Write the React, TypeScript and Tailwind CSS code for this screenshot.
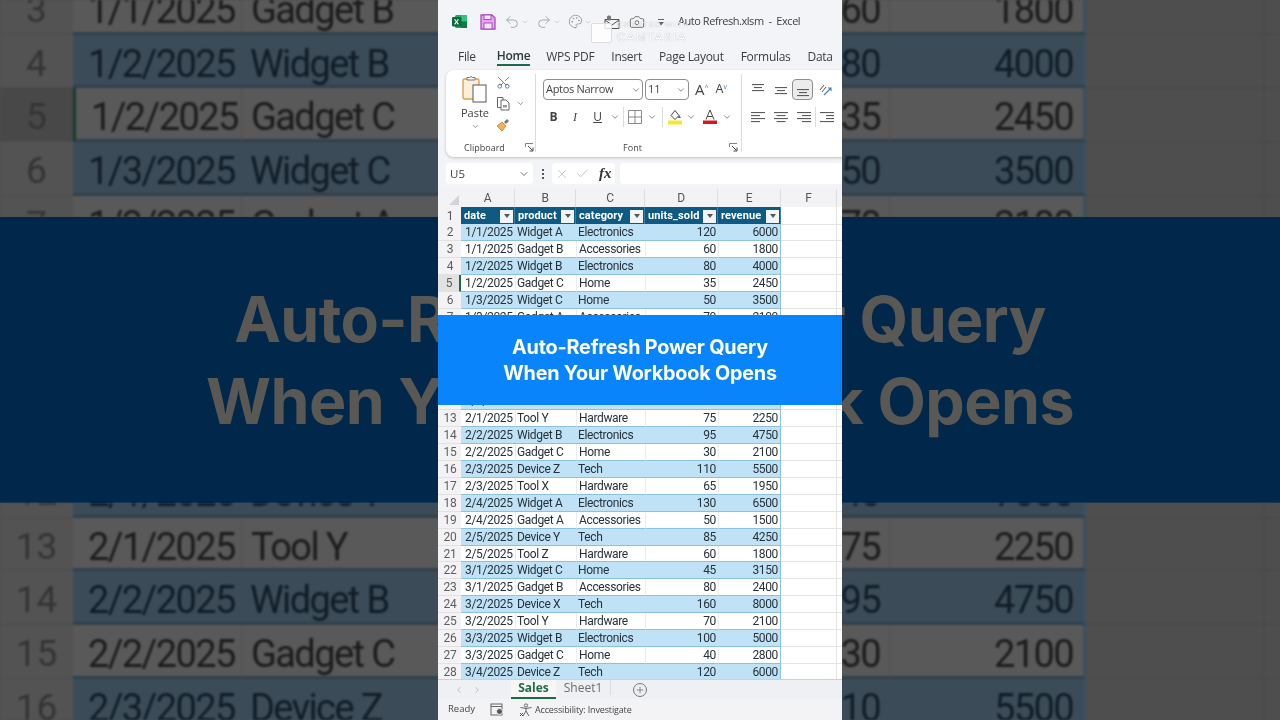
import React from 'react';
import { Undo2, Redo2, Palette, Camera, ChevronDown, X, Check, Plus, Scissors, ChevronLeft, ChevronRight } from 'lucide-react';

type Row = [number, string, string, string, number, number];

const rows: Row[] = [
    [2, '1/1/2025', 'Widget A', 'Electronics', 120, 6000],
    [3, '1/1/2025', 'Gadget B', 'Accessories', 60, 1800],
    [4, '1/2/2025', 'Widget B', 'Electronics', 80, 4000],
    [5, '1/2/2025', 'Gadget C', 'Home', 35, 2450],
    [6, '1/3/2025', 'Widget C', 'Home', 50, 3500],
    [7, '1/3/2025', 'Gadget A', 'Accessories', 70, 2100],
    [8, '1/4/2025', 'Device X', 'Tech', 150, 7500],
    [9, '1/4/2025', 'Tool X', 'Hardware', 90, 2700],
    [10, '1/5/2025', 'Widget A', 'Electronics', 110, 5500],
    [11, '1/5/2025', 'Gadget B', 'Accessories', 55, 1650],
    [12, '2/1/2025', 'Device Y', 'Tech', 140, 7000],
    [13, '2/1/2025', 'Tool Y', 'Hardware', 75, 2250],
    [14, '2/2/2025', 'Widget B', 'Electronics', 95, 4750],
    [15, '2/2/2025', 'Gadget C', 'Home', 30, 2100],
    [16, '2/3/2025', 'Device Z', 'Tech', 110, 5500],
    [17, '2/3/2025', 'Tool X', 'Hardware', 65, 1950],
    [18, '2/4/2025', 'Widget A', 'Electronics', 130, 6500],
    [19, '2/4/2025', 'Gadget A', 'Accessories', 50, 1500],
    [20, '2/5/2025', 'Device Y', 'Tech', 85, 4250],
    [21, '2/5/2025', 'Tool Z', 'Hardware', 60, 1800],
    [22, '3/1/2025', 'Widget C', 'Home', 45, 3150],
    [23, '3/1/2025', 'Gadget B', 'Accessories', 80, 2400],
    [24, '3/2/2025', 'Device X', 'Tech', 160, 8000],
    [25, '3/2/2025', 'Tool Y', 'Hardware', 70, 2100],
    [26, '3/3/2025', 'Widget B', 'Electronics', 100, 5000],
    [27, '3/3/2025', 'Gadget C', 'Home', 40, 2800],
    [28, '3/4/2025', 'Device Z', 'Tech', 120, 6000],
];

const BigRow = ({ row }: { row: Row }) => {
    const blue = row[0] % 2 === 0;
    const selected = row[0] === 5;
    return (
        <div className="grid grid-cols-[73px_168px_199px_220px_229px_197px_178px_16px] grid-rows-[53.7px] h-[53.7px] text-[38px] tracking-[-1.6px] leading-[58px]">
            <div className={`text-center border-b border-[#4c4c4c] text-[#343434] tracking-normal text-[37px] ${selected ? 'bg-[#484848]' : 'bg-[#535353]'}`}>{row[0]}</div>
            <div className={`pl-[15px] border-b-[3px] ${blue ? 'bg-[#3b4c58] border-[#30404b] text-[#101c26]' : 'bg-[#595959] border-[#30404b] text-[#1b1b1b]'} ${selected ? 'border-l-[3px] border-l-[#1c382c] pl-[12px]' : ''}`}>{row[1]}</div>
            <div className={`pl-[9px] border-b-[3px] border-[#30404b] ${blue ? 'bg-[#3b4c58] text-[#101c26]' : 'bg-[#595959] border-l border-l-[#515151] text-[#1b1b1b]'}`}>{row[2]}</div>
            <div className={`border-b-[3px] border-[#30404b] ${blue ? 'bg-[#3b4c58]' : 'bg-[#595959]'}`}></div>
            <div className={`pr-[9px] text-right border-b-[3px] border-[#30404b] ${blue ? 'bg-[#3b4c58] text-[#101c26]' : 'bg-[#595959] text-[#1b1b1b]'}`}>{row[4]}</div>
            <div className={`pr-[10px] text-right border-b-[3px] border-r-[3px] border-r-[#395060] border-b-[#30404b] ${blue ? 'bg-[#3b4c58] text-[#101c26]' : 'bg-[#595959] border-l border-l-[#515151] text-[#1b1b1b]'}`}>{row[5]}</div>
            <div className="border-b border-r border-[#484848] bg-[#4e4e4e]"></div>
            <div className="border-b border-[#484848] bg-[#4e4e4e]"></div>
        </div>
    );
};

const Backdrop = () => (
    <div className="flex flex-col h-[720px] font-['Roboto',sans-serif]">
        <div className="h-[217px] overflow-hidden blur-[1px]">
            <div className="-mt-[19px]">
                {rows.slice(1, 6).map(r => <BigRow key={r[0]} row={r} />)}
            </div>
        </div>
        <div className="h-[286px] bg-[#01284b] flex flex-col items-center justify-center text-[#5a5855] font-['Inter',sans-serif] font-bold text-[62.7px] leading-[82px] tracking-[-0.6px] blur-[0.6px]">
            <div>Auto-Refresh Power Query</div>
            <div>When Your Workbook Opens</div>
        </div>
        <div className="h-[217px] overflow-hidden blur-[1px]">
            <div className="-mt-[39px]">
                {rows.slice(10, 15).map(r => <BigRow key={r[0]} row={r} />)}
            </div>
        </div>
    </div>
);

const Chev = ({ className = '' }: { className?: string }) => (
    <ChevronDown className={`w-[10px] h-[10px] text-[#555] shrink-0 ${className}`} strokeWidth={1.6} />
);

// horizontal text lines used by the alignment buttons
const Lines = ({ widths, align = 'left', top = 2 }: { widths: number[]; align?: 'left' | 'center' | 'right'; top?: number }) => (
    <svg width="16" height="14" viewBox="0 0 16 14" className="shrink-0">
        {widths.map((w, i) => {
            const x = align === 'left' ? 1 : align === 'right' ? 15 - w : 8 - w / 2;
            return <rect key={i} x={x} y={top + i * 3} width={w} height="1.1" fill="#5c5c5c" />;
        })}
    </svg>
);

const Launcher = () => (
    <svg width="9" height="9" viewBox="0 0 9 9" className="shrink-0">
        <path d="M.5 4V.5H8" fill="none" stroke="#777" strokeWidth=".9" />
        <path d="M3 3l4.5 4.5M4.5 8H8V4.5" fill="none" stroke="#444" strokeWidth="1" />
    </svg>
);

const Vline = ({ className = '' }: { className?: string }) => <div className={`w-px bg-[#dcdcdc] shrink-0 ${className}`}></div>;

const TitleBar = () => (
    <div className="h-[40px] flex items-center pl-[14px] pt-[3px] text-[#8d8f96] shrink-0">
        <svg width="15" height="15" viewBox="0 0 15 15" className="shrink-0">
            <rect x="3" y="1" width="12" height="13" rx="1.5" fill="#21a366" />
            <rect x="9" y="1" width="6" height="6.5" fill="#33c481" />
            <rect x="9" y="7.5" width="6" height="6.5" fill="#107c41" />
            <rect x="0" y="3" width="9.5" height="9.5" rx="1.2" fill="#0b6a38" />
            <path d="M2.6 5.2l3.8 5.2M6.4 5.2l-3.8 5.2" stroke="#fff" strokeWidth="1.1" />
        </svg>
        <svg width="16" height="16" viewBox="0 0 16 16" className="ml-[13px] shrink-0">
            <path d="M1 1h11l3 3v11H1z" fill="#e9a6ee" stroke="#a94bc4" strokeWidth="1.3" />
            <rect x="4" y="1" width="7" height="4.5" fill="#f7e6f8" stroke="#a94bc4" strokeWidth="1" />
            <rect x="4" y="9" width="8" height="6" fill="#f7e6f8" stroke="#a94bc4" strokeWidth="1" />
        </svg>
        <Undo2 className="w-[16px] h-[16px] ml-[8px] text-[#9a9ca3]" strokeWidth={1.3} />
        <Chev className="ml-[1px] !w-[8px] !h-[8px] !text-[#b5b6bb]" />
        <Redo2 className="w-[16px] h-[16px] ml-[7px] text-[#9a9ca3]" strokeWidth={1.3} />
        <Chev className="ml-[1px] !w-[8px] !h-[8px] !text-[#b5b6bb]" />
        <Palette className="w-[15px] h-[15px] ml-[7px] text-[#8f9096]" strokeWidth={1.3} />
        <Chev className="ml-[1px] !w-[8px] !h-[8px] !text-[#b5b6bb]" />
        <svg width="16" height="16" viewBox="0 0 16 16" className="ml-[12px] shrink-0">
            <path d="M1 5.5h14v9H1z" fill="none" stroke="#555" strokeWidth="1" />
            <path d="M1 6l7 5 7-5" fill="none" stroke="#555" strokeWidth="1" />
            <rect x="3" y="1.5" width="4" height="5" rx="1.5" fill="#777" />
        </svg>
        <Camera className="w-[16px] h-[16px] ml-[9px] text-[#555]" strokeWidth={1.2} />
        <svg width="8" height="8" viewBox="0 0 8 8" className="ml-[12px] shrink-0">
            <rect x="1" y="1" width="6" height="1" fill="#666" />
            <path d="M1 4h6L4 7.5z" fill="#666" />
        </svg>
        <span className="ml-[13px] text-[11px] tracking-[-0.45px] text-[#3f4046] whitespace-pre">Auto Refresh.xlsm  -  Excel</span>
    </div>
);

const tabs = ['File', 'Home', 'WPS PDF', 'Insert', 'Page Layout', 'Formulas', 'Data'];

const TabBar = () => (
    <div className="h-[30px] flex pl-[20px] pt-[4px] gap-[17px] text-[12px] text-[#3c3c41] tracking-[-0.3px] shrink-0">
        {tabs.map(t => (
            <div key={t} className={`h-[22px] pt-[3px] flex items-center whitespace-nowrap ${t === 'Home' ? 'font-semibold text-[#2c3a35] border-b-2 border-[#1a6b47] ml-[4px] -mr-[1px]' : ''}`}>{t}</div>
        ))}
    </div>
);

const Ribbon = () => (
    <div className="ml-[8px] h-[87px] w-[420px] shrink-0 bg-white rounded-l-lg shadow-[0_1px_3px_rgba(0,0,0,0.22)] flex text-[#444]">
        {/* clipboard group */}
        <div className="w-[89px] shrink-0 flex flex-col">
            <div className="flex h-[62px] pt-[5px] pl-[16px]">
                <div className="w-[26px] flex flex-col items-center">
                    <svg width="26" height="28" viewBox="0 0 26 28" className="shrink-0">
                        <rect x="1" y="4" width="16" height="20" rx="1.5" fill="#fbeeda" stroke="#e0a04f" strokeWidth="1.4" />
                        <path d="M5 5V2.5h2.5a2 2 0 013 0H13V5z" fill="#fff" stroke="#777" strokeWidth="1" />
                        <rect x="11" y="10" width="13" height="17" fill="#fff" stroke="#666" strokeWidth="1.1" />
                    </svg>
                    <span className="text-[11px] leading-[14px] mt-[3px]">Paste</span>
                    <Chev className="!w-[9px] !h-[9px] mt-[2px]" />
                </div>
                <div className="ml-[8px] flex flex-col items-start">
                    <Scissors className="w-[15px] h-[15px] -rotate-90 text-[#4a6f99]" strokeWidth={1.4} />
                    <div className="flex items-center mt-[6px]">
                        <svg width="15" height="15" viewBox="0 0 15 15" className="shrink-0">
                            <path d="M1.5 1.5H7v10H1.5z" fill="none" stroke="#666" />
                            <path d="M5 4h5l3 3v7H5z" fill="#fff" stroke="#666" />
                            <rect x="7" y="9" width="4" height="2.5" fill="#999" />
                        </svg>
                        <Chev className="ml-[5px] !w-[9px] !h-[9px]" />
                    </div>
                    <svg width="15" height="15" viewBox="0 0 15 15" className="mt-[6px] shrink-0">
                        <path d="M1 9l5-4 4 4-4 5z" fill="#f0b15e" stroke="#c97f2c" strokeWidth=".8" />
                        <path d="M8 5l3-3 2 2-3 3z" fill="#777" />
                    </svg>
                </div>
            </div>
            <div className="flex items-center pl-[18px] mt-[9px] text-[9px]">
                <span className="w-[61px]">Clipboard</span>
                <Launcher />
            </div>
        </div>
        <Vline className="h-[78px] mt-[4px]" />
        {/* font group */}
        <div className="w-[205px] shrink-0 flex flex-col pl-[7px] relative">
            <div className="flex items-center mt-[9px] h-[21px]">
                <div className="w-[100px] h-[21px] border border-[#8f8f8f] rounded-[4px] flex items-center justify-between pl-[2px] pr-[1px] text-[11px] tracking-[-0.3px]">
                    Aptos Narrow<Chev />
                </div>
                <div className="ml-[2px] w-[44px] h-[21px] border border-[#8f8f8f] rounded-[4px] flex items-center justify-between pl-[2px] pr-[2px] text-[11px]">
                    11<Chev />
                </div>
                <span className="ml-[6px] text-[15px] leading-none text-[#444]">A<sup className="text-[7px] text-[#4a7fb5] -top-[5px]">^</sup></span>
                <span className="ml-[7px] text-[12.5px] leading-none text-[#444]">A<sup className="text-[7px] text-[#4a7fb5] -top-[4px]">v</sup></span>
            </div>
            <div className="flex items-center mt-[7px] h-[20px] text-[12px]">
                <span className="w-[21px] text-center font-bold">B</span>
                <span className="w-[22px] text-center italic font-['Liberation_Serif',serif]">I</span>
                <span className="w-[23px] text-center underline">U</span>
                <Chev className="ml-[1px]" />
                <Vline className="h-[20px] ml-[3px]" />
                <svg width="14" height="14" viewBox="0 0 14 14" className="ml-[4px] shrink-0">
                    <path d="M.5.5h13v13H.5zM7 .5v13M.5 7h13" fill="none" stroke="#8a8a8a" />
                </svg>
                <Chev className="ml-[5px]" />
                <Vline className="h-[20px] ml-[5px]" />
                <svg width="16" height="16" viewBox="0 0 16 16" className="ml-[4px] shrink-0">
                    <path d="M4 6.5l4-5 4 5-4 4z" fill="#fff" stroke="#444" />
                    <path d="M12 6l2 3h-3z" fill="#1f6fb2" />
                    <rect x="1" y="11.5" width="14" height="4" fill="#f5e92e" />
                </svg>
                <Chev className="ml-[3px]" />
                <svg width="16" height="16" viewBox="0 0 16 16" className="ml-[6px] shrink-0">
                    <path d="M4 10.5L8 1l4 9.5M5.5 7.5h5" fill="none" stroke="#444" strokeWidth="1" />
                    <rect x="1" y="11.5" width="14" height="3.5" fill="#d8191c" />
                </svg>
                <Chev className="ml-[4px]" />
            </div>
            <div className="flex items-center mt-[14px]">
                <span className="w-[186px] text-center text-[9px] pr-[7px]">Font</span>
                <Launcher />
            </div>
        </div>
        <Vline className="h-[78px] mt-[4px]" />
        {/* alignment group */}
        <div className="flex flex-col pl-[8px]">
            <div className="flex items-center mt-[9px] h-[21px]">
                <Lines widths={[12, 8, 12]} align="center" top={1} />
                <div className="ml-[7px]"><Lines widths={[12, 8, 12]} align="center" top={4} /></div>
                <div className="ml-[3px] w-[21px] h-[21px] rounded-[4px] border border-[#8f8f8f] bg-[#ececec] flex items-center justify-center"><Lines widths={[12, 8, 12]} align="center" top={6} /></div>
                <svg width="16" height="16" viewBox="0 0 16 16" className="ml-[4px] shrink-0">
                    <path d="M3 8l4-5M5 10l4-5" fill="none" stroke="#555" />
                    <path d="M7 13l7-7M11 6h3v3" fill="none" stroke="#3e7fb5" strokeWidth="1.1" />
                </svg>
            </div>
            <div className="flex items-center mt-[7px] h-[20px]">
                <Lines widths={[14, 9, 14, 9]} align="left" top={2} />
                <div className="ml-[7px]"><Lines widths={[14, 9, 14, 9]} align="center" top={2} /></div>
                <div className="ml-[7px]"><Lines widths={[14, 9, 14, 9]} align="right" top={2} /></div>
                <Vline className="h-[20px] ml-[3px]" />
                <div className="ml-[3px]"><Lines widths={[14, 8, 8, 14]} align="right" top={2} /></div>
            </div>
        </div>
    </div>
);

const FormulaBar = () => (
    <div className="h-[21px] mt-[6px] flex pl-[8px] shrink-0 text-[#444]">
        <div className="w-[87px] h-[21px] bg-white rounded-[4px] flex items-center justify-between pl-[4px] pr-[3px] text-[11.5px]">U5<ChevronDown className="w-[12px] h-[12px] text-[#555]" strokeWidth={1.6} /></div>
        <div className="w-[19px] flex flex-col items-center justify-center gap-[2px]">
            <span className="w-[2px] h-[2px] bg-[#555]"></span>
            <span className="w-[2px] h-[2px] bg-[#555]"></span>
            <span className="w-[2px] h-[2px] bg-[#555]"></span>
        </div>
        <div className="w-[63px] h-[21px] bg-white rounded-[4px] flex items-center pl-[3px]">
            <X className="w-[14px] h-[14px] text-[#b3b3b3]" strokeWidth={1.2} />
            <Check className="w-[15px] h-[15px] ml-[6px] text-[#b3b3b3]" strokeWidth={1.2} />
            <span className="ml-[9px] text-[15px] italic font-semibold font-['Liberation_Serif',serif] text-[#333]">fx</span>
        </div>
        <div className="ml-[5px] flex-1 h-[21px] bg-white rounded-l-[4px]"></div>
    </div>
);

const colLetters = ['A', 'B', 'C', 'D', 'E', 'F'];
const heads = ['date', 'product', 'category', 'units_sold', 'revenue'];
const sheetCols = 'grid grid-cols-[23px_54px_61px_69px_73px_63px_56px_5px]';

const Sheet = () => (
    <div className="flex-1 flex flex-col overflow-hidden bg-white font-['Roboto',sans-serif] text-[12px] tracking-[-0.35px]">
        <div className={`${sheetCols} h-[18px] bg-[#f3f3f5] text-[#555] text-[12px] shrink-0`}>
            <div className="flex items-end justify-end pr-[2px] pb-[2px]">
                <svg width="10" height="10" viewBox="0 0 10 10"><path d="M10 0v10H0z" fill="#d4d4d6" /></svg>
            </div>
            {colLetters.map(c => <div key={c} className="flex items-center justify-center border-r border-[#dedede]">{c}</div>)}
            <div></div>
        </div>
        <div className={`${sheetCols} h-[17px] shrink-0`}>
            <div className="bg-[#f3f3f5] text-[#555] flex items-center justify-center pl-[1px]">1</div>
            {heads.map(h => (
                <div key={h} className="bg-[#0f5a83] text-white font-bold flex items-center justify-between pl-[3px] pr-[1px] tracking-[0.1px] text-[11px] border-r border-[#3d7fa3]">
                    {h}
                    <span className="w-[13px] h-[13px] bg-[#f2f5f7] flex items-center justify-center shrink-0">
                        <span className="w-0 h-0 border-x-[3px] border-x-transparent border-t-[4px] border-t-[#555]"></span>
                    </span>
                </div>
            ))}
            <div className="border-r border-b border-[#e4e4e4]"></div>
            <div className="border-b border-[#e4e4e4]"></div>
        </div>
        {rows.map(r => {
            const blue = r[0] % 2 === 0;
            const selected = r[0] === 5;
            const fill = blue ? 'bg-[#bfe2f6]' : 'bg-white';
            return (
                <div key={r[0]} className={`${sheetCols} grid-rows-[16.93px] h-[16.93px] shrink-0 leading-[17px] text-[#27313a]`}>
                    <div className={`text-center pl-[1px] text-[#5e5e5e] border-b border-[#e2e2e2] ${selected ? 'bg-[#e2e2e2] border-r-2 border-r-[#1a6b47]' : 'bg-[#f3f3f5]'}`}>{r[0]}</div>
                    <div className={`${fill} pl-[4px] border-b border-[#8cc2df]`}>{r[1]}</div>
                    <div className={`${fill} border-b border-[#8cc2df] ${blue ? 'pl-[2px]' : 'pl-[1px] border-l border-l-[#ececec]'}`}>{r[2]}</div>
                    <div className={`${fill} pl-[2px] whitespace-nowrap border-b border-[#8cc2df] ${blue ? '' : 'border-l border-l-[#ececec]'}`}>{r[3]}</div>
                    <div className={`${fill} pr-[2px] text-right border-b border-[#8cc2df] ${blue ? '' : 'border-l border-l-[#ececec]'}`}>{r[4]}</div>
                    <div className={`${fill} pr-[2px] text-right border-b border-r border-[#8cc2df] ${blue ? '' : 'border-l-[#ececec] border-l'}`}>{r[5]}</div>
                    <div className="border-r border-b border-[#e4e4e4]"></div>
                    <div className="border-b border-[#e4e4e4]"></div>
                </div>
            );
        })}
    </div>
);

const SheetTabs = () => (
    <div className="h-[20px] bg-[#eff0f3] flex items-stretch shrink-0 border-t border-[#d0d0d0] text-[12px]">
        <div className="w-[73px] flex items-center pl-[16px] gap-[8px] text-[#b4b4b4]">
            <ChevronLeft className="w-[10px] h-[10px]" strokeWidth={2} />
            <ChevronRight className="w-[10px] h-[10px]" strokeWidth={2} />
        </div>
        <div className="w-[45px] bg-[#f7f7f7] border-b-2 border-[#1a6b47] text-center font-bold text-[#216b48] leading-[15px]">Sales</div>
        <div className="w-[54px] text-center text-[#6d6d6d] leading-[15px]">Sheet1</div>
        <Vline className="h-[15px] bg-[#bdbdbd]" />
        <div className="ml-[22px] flex items-center">
            <div className="w-[14px] h-[14px] rounded-full border border-[#777] flex items-center justify-center">
                <Plus className="w-[10px] h-[10px] text-[#555]" strokeWidth={1.5} />
            </div>
        </div>
    </div>
);

const StatusBar = () => (
    <div className="h-[21px] bg-[#f3f3f5] flex items-center pl-[10px] text-[9px] text-[#444] shrink-0">
        <span className="w-[42px] text-[9.5px]">Ready</span>
        <svg width="14" height="13" viewBox="0 0 14 13" className="shrink-0">
            <rect x="1" y="1" width="11" height="11" fill="none" stroke="#666" />
            <path d="M1 3.5h11" stroke="#666" />
            <circle cx="9.5" cy="8.5" r="3" fill="#555" stroke="#f3f3f5" />
        </svg>
        <svg width="14" height="14" viewBox="0 0 14 14" className="ml-[15px] shrink-0">
            <circle cx="7" cy="2.5" r="1.6" fill="none" stroke="#666" />
            <path d="M1.5 4.5L7 5.5l5.5-1M7 5.5V8L4 13M7 8l3 5" fill="none" stroke="#666" />
            <path d="M1 10l3 3M4 10l-3 3" stroke="#555" />
        </svg>
        <span className="ml-[2px] tracking-[-0.15px]">Accessibility: Investigate</span>
    </div>
);

const Phone = () => (
    <div className="absolute left-[438px] top-0 w-[404px] h-[720px] flex flex-col bg-[#f3f4f8] overflow-hidden font-['Open_Sans',sans-serif] blur-[0.3px]">
        <TitleBar />
        <TabBar />
        <Ribbon />
        <FormulaBar />
        <div className="h-[5px] shrink-0"></div>
        <Sheet />
        <SheetTabs />
        <StatusBar />
        {/* screen recorder watermark */}
        <div className="absolute left-[153px] top-[23px] w-[21px] h-[20px] bg-white/80 border border-[#dcdde2] rounded-[2px]"></div>
        <div className="absolute left-[179px] top-[21px] text-white leading-none font-['Liberation_Sans',sans-serif] [text-shadow:0_0_1px_rgba(0,0,0,0.4)]">
            <div className="text-[8px] tracking-[1px]">CREATED WITH</div>
            <div className="text-[11.5px] tracking-[1.5px] mt-[3px]">CAMTASIA</div>
        </div>
        {/* title banner */}
        <div className="absolute left-0 top-[315px] w-full h-[90px] bg-[#0a84fb] flex flex-col items-center justify-center text-white font-['Inter',sans-serif] font-bold text-[19.8px] leading-[26px] tracking-[-0.2px]">
            <div>Auto-Refresh Power Query</div>
            <div>When Your Workbook Opens</div>
        </div>
    </div>
);

export default function App() {
    return (
        <div className="relative w-[1280px] h-[720px] overflow-hidden bg-[#4e4e4e]">
            <Backdrop />
            <Phone />
        </div>
    );
}
